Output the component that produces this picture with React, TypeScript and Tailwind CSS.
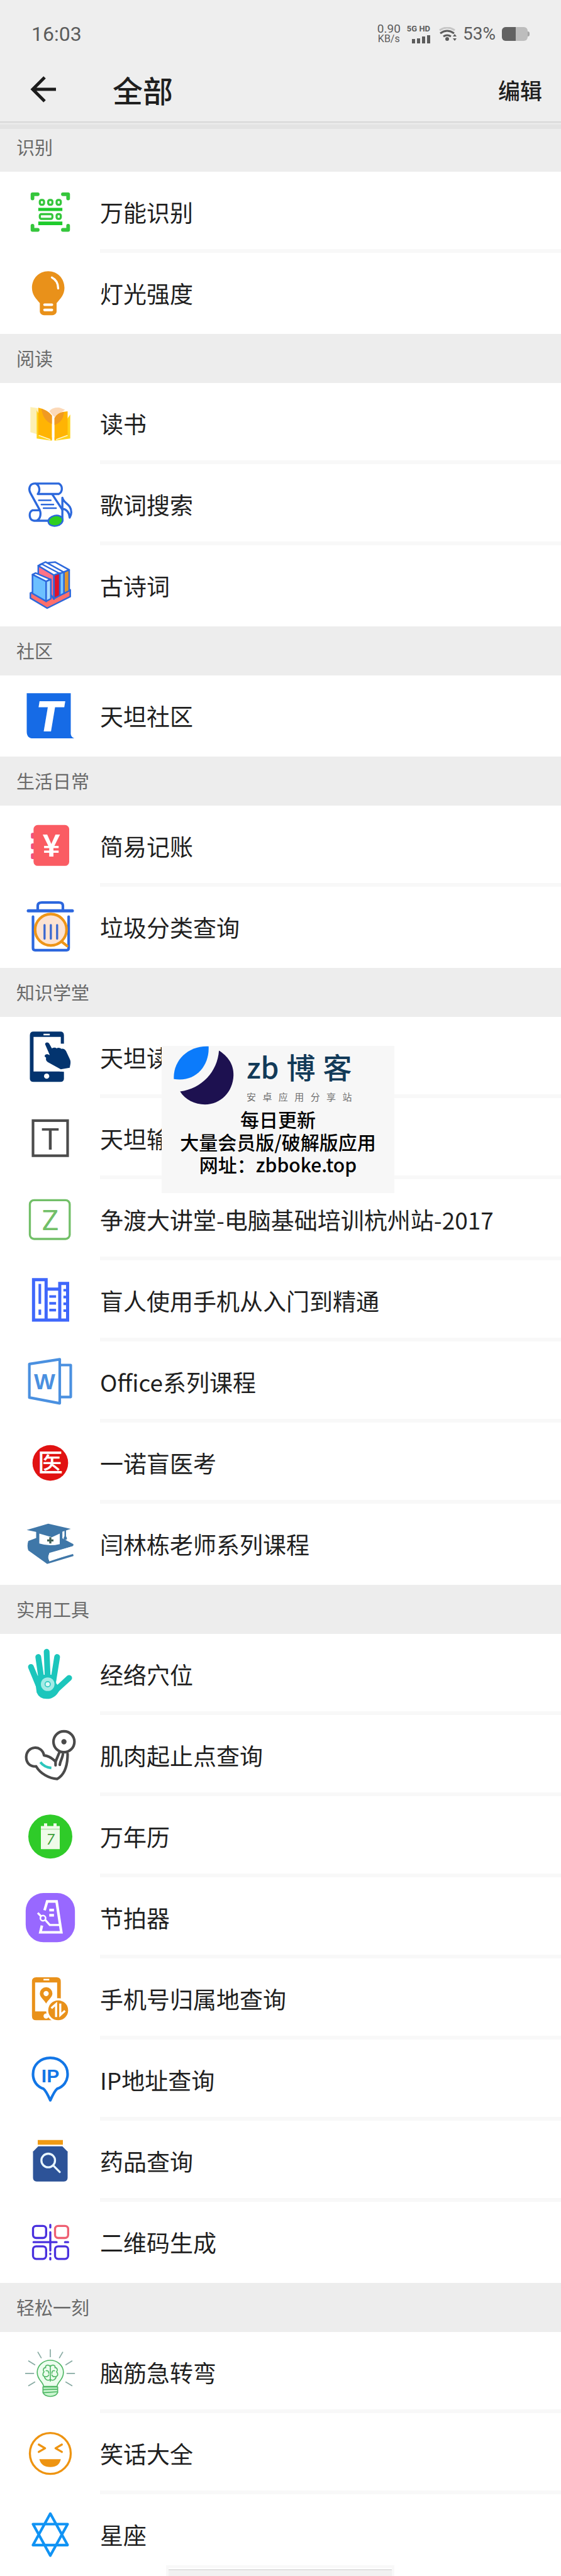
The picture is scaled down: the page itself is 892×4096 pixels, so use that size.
import { ReactNode } from "react";

type Item = { title: string; icon: ReactNode };
type Section = { title: string; items: Item[]; overlay?: boolean };

const cjk = "font-['Noto_Sans_CJK_SC',sans-serif]";

const Icon = ({ children }: { children: ReactNode }) => (
  <svg viewBox="0 0 96 96" className="h-20 w-20 shrink-0 overflow-visible" fill="none" aria-hidden="true">
    {children}
  </svg>
);

const ScanIcon = () => (
  <Icon>
    <g stroke="#35c63c" strokeLinecap="round" strokeLinejoin="round">
      <path strokeWidth="7" d="M14 21V13H24M72 13H82V21M82 73V81H72M24 81H14V73" />
      <rect x="28" y="24" width="8" height="9" rx="3" strokeWidth="4" />
      <rect x="44" y="24" width="8" height="9" rx="3" strokeWidth="4" />
      <rect x="60" y="24" width="8" height="9" rx="3" strokeWidth="4" />
      <rect x="28" y="51" width="24" height="9" rx="3" strokeWidth="4" />
      <rect x="60" y="51" width="8" height="9" rx="3" strokeWidth="4" />
    </g>
    <path fill="#1ecb2c" d="M25 39h46v6H25zM25 65h46v7H25z" />
  </Icon>
);

const BulbIcon = () => (
  <Icon>
    <path
      fill="#e9911a"
      d="M44 5C26 5 13 19 13 37c0 13 8 21 15 29v16c0 4 4 7 8 7h16c4 0 8-3 8-7V66c7-8 15-16 15-29C75 19 62 5 44 5z"
    />
    <path stroke="#fff" strokeWidth="4" strokeLinecap="round" d="M51 17q12 6 12 21" />
    <path stroke="#fff" strokeWidth="5" strokeLinecap="round" d="M37 69h14M37 79h14" />
  </Icon>
);

const ReadIcon = () => (
  <Icon>
    <path fill="#fdf0b4" d="M10 16l14 2v50l-14-4z" />
    <path fill="#ffd21a" d="M22 22v54l29 4V74z" />
    <path fill="#ffd21a" d="M86 30v46l-30 4v-6z" />
    <path fill="#fcd9b8" d="M46 24q6-8 20-7l10 4-20 14z" />
    <path fill="#ffb404" d="M25 17q16 3 26 15v47l-26-9z" />
    <path fill="#ffb404" d="M56 37q6-12 25-13v46l-25 9z" />
    <path fill="#f09a22" d="M31 19q14 5 20 13v16Q34 42 31 19z" />
    <path fill="#f09a22" d="M56 37q5-10 18-12-1 20-18 25z" />
    <path stroke="#fff6d0" strokeWidth="2" d="M26 70l22 8M81 70l-22 8" />
  </Icon>
);

const LyricsIcon = () => (
  <Icon>
    <g stroke="#2c68dc" strokeWidth="4" strokeLinecap="round" strokeLinejoin="round">
      <path d="M17 7h47c8 4 8 16 0 20H24c5-6 4-16-4-20M17 7C8 8 6 18 10 25l17 31c4 7 3 19-6 22H17c-10-1-11-17-3-20h12M17 78h26" />
      <path d="M52 28l19 29" />
      <path strokeWidth="3" d="M26 39h23M31 47h23M35 54h24" />
      <path d="M71 76V34c3 12 17 12 17 28 0 5-3 10-3 10-1-10-6-16-14-17" />
    </g>
    <ellipse cx="58" cy="78" rx="14" ry="10" fill="#2fcf20" stroke="#2c68dc" strokeWidth="3" transform="rotate(-12 58 78)" />
  </Icon>
);

const PoemIcon = () => (
  <Icon>
    <g stroke="#2c68dc" strokeWidth="3" strokeLinejoin="round" strokeLinecap="round">
      <path fill="#ff6f6b" d="M10 61v10l32 19 44-22V55L60 44z" />
      <path fill="#fff" d="M57 2l27 15-10 5L40 4z" />
      <path fill="#e0952e" d="M74 21l10-4v40l-10 5z" />
      <path fill="#fff" d="M39 2l34 19-7 4-38-18z" />
      <path fill="#7cc8ff" d="M66 24l8-3v41l-8 4z" />
      <path fill="#ff7386" d="M25 9l30 18v46L25 30z" />
      <path fill="#fff" d="M25 9l7-3 34 18-11 3z" />
      <path fill="#e0122a" d="M55 27l11-4v43l-11 6z" />
      <path fill="#fff" d="M14 26l6-3 28 12-8 4z" />
      <path fill="#6cc0ff" d="M14 26l26 13v38L14 62z" />
      <path fill="#a9dcff" d="M40 39l9-4v37l-9 5z" />
    </g>
  </Icon>
);

const CommunityIcon = () => (
  <Icon>
    <path fill="#166be6" d="M3 4h84v78q1 6 7 8H15Q3 90 3 77z" />
    <text x="46" y="77" textAnchor="middle" fill="#fff" className="font-['Inter'] text-[80px] font-extrabold italic">
      T
    </text>
  </Icon>
);

const LedgerIcon = () => (
  <Icon>
    <g fill="#f2517c">
      <rect x="11" y="22" width="8" height="11" rx="3" />
      <rect x="11" y="42" width="8" height="11" rx="3" />
      <rect x="11" y="61" width="8" height="11" rx="3" />
    </g>
    <rect x="16" y="7" width="68" height="78" rx="8" fill="#fa5c63" />
    <text x="50" y="67" textAnchor="middle" fill="#fff" className="font-['Liberation_Sans'] text-[60px] font-bold">
      ¥
    </text>
  </Icon>
);

const TrashIcon = () => (
  <Icon>
    <g stroke="#2c67de" strokeLinecap="round" strokeLinejoin="round">
      <path strokeWidth="5" d="M24 14V6q0-6 8-6h32q8 0 8 6v8" />
      <path strokeWidth="6" d="M6 16h84" />
      <path strokeWidth="5" d="M15 27v60q0 4 4 4h60q4 0 4-4V27" />
    </g>
    <circle cx="49" cy="52" r="30" fill="#fde3d2" stroke="#ee9518" strokeWidth="5" />
    <path stroke="#ee9518" strokeWidth="5" strokeLinecap="round" d="M70 75l10 8" />
    <path stroke="#3a68d0" strokeWidth="4" strokeLinecap="round" d="M37 43v26M49 43v26M61 43v26" />
  </Icon>
);

const PhoneTouchIcon = () => (
  <Icon>
    <path
      fill="#03346f"
      fillRule="evenodd"
      d="M16-2h51q7 0 7 7v83q0 6-7 6H16q-7 0-7-6V5q0-7 7-7zM16 8v66h52V8zM35 2v3h12V2z"
    />
    <circle cx="41" cy="83" r="5" fill="#fff" />
    <path fill="#fff" d="M66 21h14v54l-14-1z" />
    <path
      fill="#03346f"
      d="M38 22c0-4 6-5 8-1l5 9c3-2 7-2 9 0 3-2 7-1 9 1 4-1 7 1 9 4l7 15c3 6 1 11 0 17L68 70 43 56c-3-2-4-5-3-8l-3-3c1-5 6-5 10-2z"
    />
  </Icon>
);

const LetterTIcon = () => (
  <Icon>
    <rect x="15" y="13" width="66" height="67" stroke="#4b4b4b" strokeWidth="5" />
    <text x="48" y="68" textAnchor="middle" fill="#4b4b4b" className="font-['Roboto'] text-[58px]">
      T
    </text>
  </Icon>
);

const LetterZIcon = () => (
  <Icon>
    <rect x="9" y="10" width="76" height="74" rx="8" stroke="#72bf68" strokeWidth="4" />
    <text x="48" y="67" textAnchor="middle" fill="#72bf68" className="font-['Roboto'] text-[54px]">
      Z
    </text>
  </Icon>
);

const BuildingIcon = () => (
  <Icon>
    <g stroke="#3f67fb" strokeWidth="6">
      <path d="M16 84V7h24v77M40 25h25M66 84V14h15v70M13 84h71" />
      <path strokeWidth="5" d="M28 15v38M28 64v10M46 39h13M46 52h13M46 65h13M73 27h8M73 40h8M73 53h8M73 66h8" />
    </g>
  </Icon>
);

const OfficeIcon = () => (
  <Icon>
    <g stroke="#4a90e0" strokeWidth="5" strokeLinejoin="round">
      <path d="M68 15h19v61H68" />
      <path d="M8 13l58-9v84L8 77z" />
    </g>
    <text x="37" y="61" textAnchor="middle" fill="#4a90e0" className="font-['Liberation_Sans'] text-[43px] font-bold">
      W
    </text>
  </Icon>
);

const MedicalIcon = () => (
  <Icon>
    <circle cx="48" cy="47" r="34" fill="#e11212" />
    <text x="48" y="64" textAnchor="middle" fill="#fff" className="font-['Noto_Sans_CJK_SC'] text-[48px] font-medium">
      医
    </text>
  </Icon>
);

const GraduateIcon = () => (
  <Icon>
    <g fill="#3f77a8">
      <path d="M6 41l16-6 49 1 21 11q1 4-4 5L46 64v16l44-15q3 2 2 5L42 85 6 59q-3-9 0-18z" />
      <path d="M3 20L44 8l43 10-36 12z" />
      <path d="M21 22h50v24H21zM75 20h3v12q4 6-1 7-6-1-2-7z" />
    </g>
    <path fill="#fff" d="M27 27l24 7 15-7v20q-20 5-39-1zM46 65l45-14v15L46 79q-4-7 0-14z" />
    <path stroke="#3f6058" strokeWidth="4" d="M48 34v12M42 40h12" />
  </Icon>
);

const HandIcon = () => (
  <Icon>
    <g stroke="#1cc6bc" strokeWidth="11" strokeLinecap="round">
      <path d="M11 33l14 34M25 14l6 42M41 4l2 50M61 14l-7 44M84 54L60 76" />
    </g>
    <path fill="#1cc6bc" d="M18 53l10-5h31v16l8 10q-8 20-26 20-14 0-19-12z" />
    <circle cx="43" cy="66" r="13" fill="#a4ebe6" />
    <circle cx="43" cy="66" r="5" stroke="#2fc9c0" strokeWidth="2" fill="#dff8f6" />
  </Icon>
);

const MuscleIcon = () => (
  <Icon>
    <g stroke="#4a4a4a" strokeWidth="5" strokeLinecap="round" strokeLinejoin="round">
      <circle cx="74" cy="21" r="20" />
      <circle cx="74" cy="21" r="3" fill="#4a4a4a" strokeWidth="4" />
      <path d="M81 44c0 16-2 38-20 48C46 91 29 82 21 68 8 69 2 60 2 50c1-22 30-24 34-3 9 1 15 5 21 11M65 42l-7 17v7M72 45c-1 8-5 12-6 20" />
    </g>
    <path stroke="#2cc6bc" strokeWidth="5" d="M29 60q8 10 21 11" />
  </Icon>
);

const CalendarIcon = () => (
  <Icon>
    <circle cx="48" cy="47" r="42" fill="#2fcb29" />
    <path fill="#effbe9" d="M30 27h6v-5h6v5h12v-5h6v5h6v44H30z" />
    <path stroke="#b6e5ae" strokeWidth="2" d="M30 33h36" />
    <text x="48" y="62" textAnchor="middle" fill="#3fa03c" className="font-['Roboto'] text-[28px] italic">
      7
    </text>
  </Icon>
);

const MetronomeIcon = () => (
  <Icon>
    <rect x="1" y="0" width="94" height="94" rx="34" fill="#9868ff" />
    <g stroke="#fff" strokeWidth="5">
      <path d="M37 33l5-17h18l9 59H29l3-13" />
      <path strokeWidth="4" d="M24 38l7 7M38 51l9 10h18" />
      <circle cx="34" cy="48" r="5" strokeWidth="3" />
    </g>
    <path fill="#fff" d="M46 30h9v5h-9zM46 40h9v5h-9z" />
  </Icon>
);

const PhoneLocationIcon = () => (
  <Icon>
    <path
      fill="#e9911a"
      fillRule="evenodd"
      d="M21 6h39q8 0 8 8v66q0 8-8 8H21q-8 0-8-8V14q0-8 8-8zM19 16v55h42V16zM35 9v3h11V9z"
    />
    <path
      fill="#e9911a"
      fillRule="evenodd"
      d="M40 25a12 12 0 0 1 12 12c0 7-7 11-12 19-5-8-12-12-12-19a12 12 0 0 1 12-12zm0 7a5 5 0 1 0 0 10 5 5 0 0 0 0-10z"
    />
    <circle cx="40" cy="80" r="5" fill="#fff" />
    <circle cx="63" cy="69" r="21" fill="#e9911a" stroke="#fff" strokeWidth="4" />
    <path stroke="#fff" strokeWidth="4" d="M50 65l9-8v25M67 56v22l9-8" />
  </Icon>
);

const IpIcon = () => (
  <Icon>
    <path
      stroke="#1276e6"
      strokeWidth="5"
      strokeLinejoin="round"
      d="M48 5c-19 0-33 13-33 31 0 14 8 24 20 28 4 3 9 13 13 22 4-9 9-19 13-22 12-4 20-14 20-28C81 18 67 5 48 5z"
    />
    <text x="48" y="52" textAnchor="middle" fill="#1276e6" className="font-['Liberation_Sans'] text-[36px] font-bold">
      IP
    </text>
  </Icon>
);

const MedicineIcon = () => (
  <Icon>
    <path fill="#f09a14" d="M24 7h48v9H24z" />
    <path fill="#2d5398" d="M25 19h46l10 10v50q0 7-7 7H22q-7 0-7-7V29z" />
    <circle cx="44" cy="46" r="13" stroke="#e8f6ff" strokeWidth="4" />
    <path stroke="#e8f6ff" strokeWidth="4" strokeLinecap="round" d="M54 56l12 12" />
  </Icon>
);

const QrIcon = () => (
  <Icon>
    <g stroke="#4930de" strokeWidth="4" strokeLinecap="round">
      <rect x="15" y="16" width="25" height="23" rx="6" />
      <rect x="15" y="55" width="25" height="24" rx="6" />
      <rect x="57" y="55" width="25" height="24" rx="6" />
      <rect x="57" y="16" width="25" height="23" rx="6" stroke="#ee5f72" />
      <path d="M16 47h44M76 47h6M48 14v5M48 28v35M48 69v1M48 77v3" />
    </g>
  </Icon>
);

const BrainIcon = () => (
  <Icon>
    <path
      stroke="#87aaa2"
      strokeWidth="2"
      d="M48 3v15M24 8l7 12M72 8l-7 12M6 25l13 8M90 25l-13 8M0 49h17M79 49h16M6 73l13-8M90 73l-13-8"
    />
    <g stroke="#4fb765" strokeWidth="2" strokeLinecap="round">
      <path fill="#ecfdee" d="M35 74c0-9-12-12-12-27a25 23 0 0 1 50 0c0 15-12 18-12 27z" />
      <path fill="#c9f5cf" d="M34 75h28v11q-4 7-14 7t-14-7zM34 80l28-1M34 86l28-2" />
      <path d="M48 34v30M47 35c-4-4-9-1-8 3-4 0-6 5-3 8-3 3-3 8 1 9 0 5 6 9 10 6M49 35c4-4 9-1 8 3 4 0 6 5 3 8 3 3 3 8-1 9 0 5-6 9-10 6M40 44c4-1 5 2 5 5M39 55c3 1 5-1 6-3M56 44c-4-1-5 2-5 5M57 55c-3 1-5-1-6-3" />
    </g>
  </Icon>
);

const LaughIcon = () => (
  <Icon>
    <circle cx="48" cy="47" r="39" stroke="#ee9411" strokeWidth="4" />
    <path
      stroke="#ee9411"
      strokeWidth="4"
      strokeLinecap="round"
      strokeLinejoin="round"
      d="M26 30l12 7-12 7M70 30l-12 7 12 7"
    />
    <path fill="#ee9411" d="M27 58h41q-3 15-20 15T27 58z" />
  </Icon>
);

const StarIcon = () => (
  <Icon>
    <path
      stroke="#1093f4"
      strokeWidth="5"
      strokeLinejoin="round"
      d="M48 7L15 67h66zM48 87L15 27h66z"
    />
  </Icon>
);

const sections: Section[] = [
  {
    title: "识别",
    items: [
      { title: "万能识别", icon: <ScanIcon /> },
      { title: "灯光强度", icon: <BulbIcon /> },
    ],
  },
  {
    title: "阅读",
    items: [
      { title: "读书", icon: <ReadIcon /> },
      { title: "歌词搜索", icon: <LyricsIcon /> },
      { title: "古诗词", icon: <PoemIcon /> },
    ],
  },
  { title: "社区", items: [{ title: "天坦社区", icon: <CommunityIcon /> }] },
  {
    title: "生活日常",
    items: [
      { title: "简易记账", icon: <LedgerIcon /> },
      { title: "垃圾分类查询", icon: <TrashIcon /> },
    ],
  },
  {
    title: "知识学堂",
    overlay: true,
    items: [
      { title: "天坦读", icon: <PhoneTouchIcon /> },
      { title: "天坦输", icon: <LetterTIcon /> },
      { title: "争渡大讲堂-电脑基础培训杭州站-2017", icon: <LetterZIcon /> },
      { title: "盲人使用手机从入门到精通", icon: <BuildingIcon /> },
      { title: "Office系列课程", icon: <OfficeIcon /> },
      { title: "一诺盲医考", icon: <MedicalIcon /> },
      { title: "闫林栋老师系列课程", icon: <GraduateIcon /> },
    ],
  },
  {
    title: "实用工具",
    items: [
      { title: "经络穴位", icon: <HandIcon /> },
      { title: "肌肉起止点查询", icon: <MuscleIcon /> },
      { title: "万年历", icon: <CalendarIcon /> },
      { title: "节拍器", icon: <MetronomeIcon /> },
      { title: "手机号归属地查询", icon: <PhoneLocationIcon /> },
      { title: "IP地址查询", icon: <IpIcon /> },
      { title: "药品查询", icon: <MedicineIcon /> },
      { title: "二维码生成", icon: <QrIcon /> },
    ],
  },
  {
    title: "轻松一刻",
    items: [
      { title: "脑筋急转弯", icon: <BrainIcon /> },
      { title: "笑话大全", icon: <LaughIcon /> },
      { title: "星座", icon: <StarIcon /> },
    ],
  },
];

const StatusBar = () => (
  <div className="flex h-[108px] items-center justify-between pl-[50px] pr-[50px] font-['Roboto',sans-serif] text-[#5c5c5c]">
    <span className="text-[32px] leading-none">16:03</span>
    <div className="flex items-center gap-[10px]">
      <div className="flex flex-col items-center leading-4">
        <span className="text-[19px] leading-4">0.90</span>
        <span className="text-[16px] leading-4">KB/s</span>
      </div>
      <div className="flex flex-col items-end gap-1">
        <span className="text-[13px] font-bold leading-3">5G HD</span>
        <svg viewBox="0 0 29 13" className="h-[13px] w-[29px]" fill="#5c5c5c" aria-hidden="true">
          <path d="M0 6h5v7H0zM8 5h5v8H8zM16 2h5v11h-5zM24 0h5v13h-5z" />
        </svg>
      </div>
      <svg viewBox="0 0 28 22" className="ml-1 h-[22px] w-7" fill="none" aria-hidden="true">
        <path stroke="#c6c6c6" strokeWidth="3" d="M1 5q12-8 24 0" />
        <path stroke="#5c5c5c" strokeWidth="3" d="M2 10q11-8 22 0M7 15q6-4 12 0" />
        <circle cx="13" cy="19" r="3" fill="#5c5c5c" />
        <path fill="#5c5c5c" d="M22 15l3-4 3 4zM22 18l3 4 3-4z" />
      </svg>
      <span className="text-[28px] leading-none">53%</span>
      <div className="flex items-center">
        <div className="flex h-[22px] w-[41px] overflow-hidden rounded-[6px] bg-[#bdbdbd]">
          <div className="h-full w-[22px] bg-[#626262]" />
        </div>
        <div className="h-2 w-[3px] rounded-r bg-[#a5a5a5]" />
      </div>
    </div>
  </div>
);

const Promo = () => (
  <div className="absolute left-[257px] top-[46px] z-10 h-[234px] w-[370px] bg-[#f7f7f7] text-center text-black">
    <div className="flex h-[98px]">
      <svg viewBox="0 0 144 114" className="ml-4 h-[94px] w-[119px] shrink-0" aria-hidden="true">
        <path fill="#0b7bfb" d="M4 64C2 28 32-1 71 1c2 38-26 70-67 63z" />
        <path fill="#1d1150" d="M91 9c16 10 29 26 28 48-1 32-25 56-55 56-20 0-38-9-48-25C58 82 88 50 91 9z" />
      </svg>
      <div className="flex flex-col pt-px">
        <div className="flex h-[62px] items-center gap-3 text-[46px] font-medium leading-none text-[#123a58]">
          <span>zb</span>
          <span>博</span>
          <span>客</span>
        </div>
        <div className="flex justify-between pt-2 text-[15px] leading-5 text-[#6e6e6e]">
          {["安", "卓", "应", "用", "分", "享", "站"].map((char) => (
            <span key={char}>{char}</span>
          ))}
        </div>
      </div>
    </div>
    <p className="text-[30px] font-medium leading-9">每日更新</p>
    <p className="text-[30px] font-medium leading-9">大量会员版/破解版应用</p>
    <p className="text-[30px] font-medium leading-9">网址：zbboke.top</p>
  </div>
);

const App = () => {
  return (
    <div className={`relative min-h-screen w-full overflow-hidden bg-white text-[#1f1f1f] ${cjk}`} lang="zh-CN">
      {/* status bar & title */}
      <header className="relative z-10 h-[195px] border-b-2 border-b-[#d8d8d8] bg-[#eee] shadow-[0_3px_0_#eaeaea,0_10px_0_#e3e3e3]">
        <StatusBar />
        <div className="flex h-[68px] items-center pl-[46px] pr-[30px]">
          <button type="button" aria-label="返回" className="h-[46px] w-[46px]">
            <svg viewBox="0 0 46 46" className="h-full w-full" fill="none" aria-hidden="true">
              <path stroke="#1c1c1c" strokeWidth="5" d="M43 23H7M25 4L6 23l19 19" />
            </svg>
          </button>
          <h1 className="ml-[87px] flex-1 text-[48px] font-medium leading-none">全部</h1>
          <button type="button" className="text-[35px] font-medium leading-none">
            编辑
          </button>
        </div>
      </header>
      {/* tool list */}
      <main>
        {sections.map((section) => (
          <section key={section.title} className="relative">
            <h2 className="flex h-[78px] items-center bg-[#ededed] pl-[26px] text-[29px] text-[#6a6a6a]">
              {section.title}
            </h2>
            <ul className="relative">
              {section.items.map((item, i) => (
                <li key={item.title}>
                  <a href="#" className="flex h-[129px] items-center pl-10">
                    {item.icon}
                    <span
                      className={`ml-[39px] flex h-full flex-1 items-center border-b-[6px] pt-1.5 text-[37px] ${
                        i < section.items.length - 1 ? "border-b-[#f8f8f8]" : "border-b-transparent"
                      }`}>
                      {item.title}
                    </span>
                  </a>
                </li>
              ))}
              {section.overlay && <Promo />}
            </ul>
          </section>
        ))}
      </main>
      {/* gesture handle */}
      <div className="absolute bottom-0 left-[264px] h-[17px] w-[363px] border-4 border-b-0 border-[#f8f8f8] bg-white">
        <div className="h-0.5 bg-white" />
        <div className="h-0.5 bg-[#e0e0e0]" />
        <div className="h-[9px] bg-[#f1f1f1]" />
      </div>
    </div>
  );
};

export default App;
